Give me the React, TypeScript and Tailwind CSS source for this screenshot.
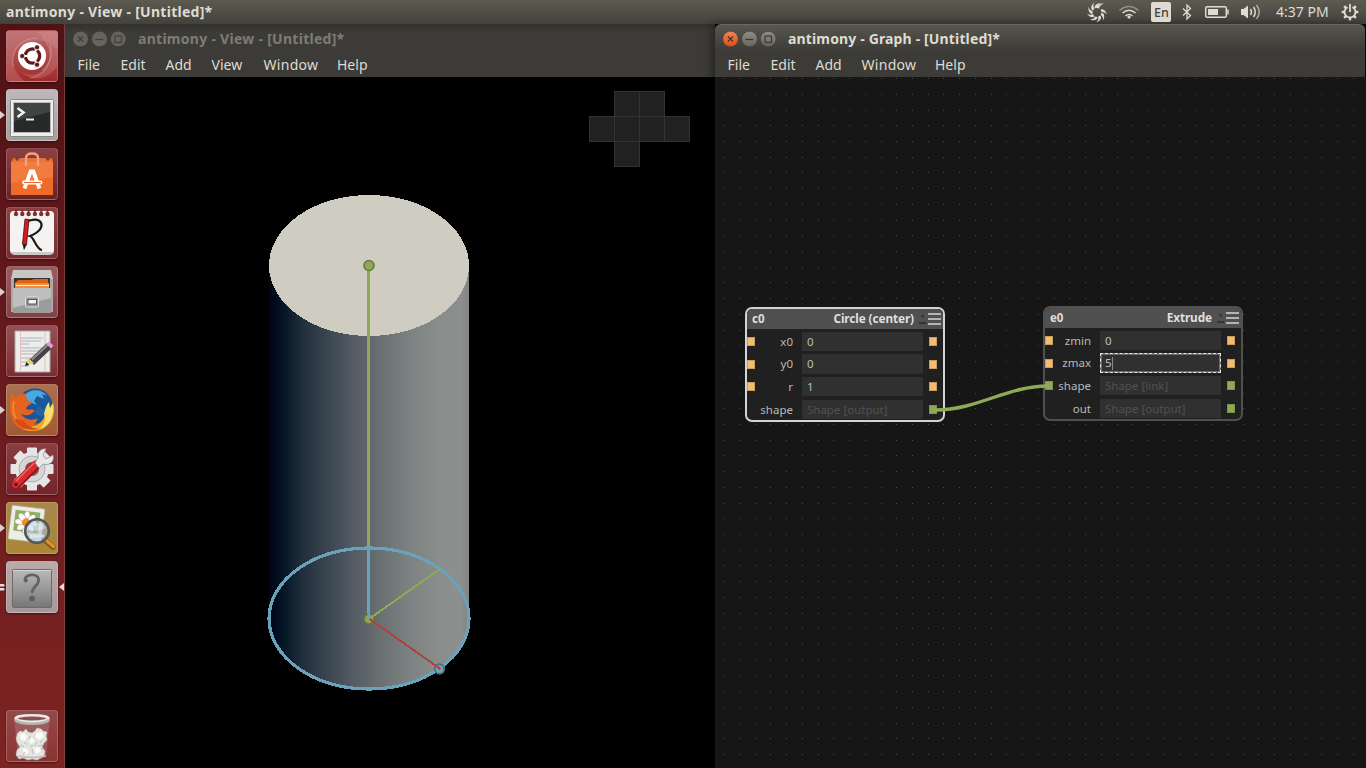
import type { ReactNode } from "react";

function WindowButtons({ active }: { active: boolean }) {
  const stroke = active ? "#3a3935" : "#3f3e3a";
  return (
    <svg className="block h-[18px] w-[54px] shrink-0" viewBox="0 0 54 18" fill="none">
      <defs>
        <linearGradient id="closeFill" x1="0" y1="0" x2="0" y2="1">
          <stop offset="0" stopColor="#f58256" />
          <stop offset="1" stopColor="#dd4c1c" />
        </linearGradient>
        <linearGradient id="grayFill" x1="0" y1="0" x2="0" y2="1">
          <stop offset="0" stopColor="#8f8d86" />
          <stop offset="1" stopColor="#66655f" />
        </linearGradient>
      </defs>
      <circle cx="8.500" cy="9" r="7.800" fill={active ? "url(#closeFill)" : "#64635d"} stroke="#37362f" strokeWidth=".5" />
      <circle cx="27.500" cy="9" r="7.800" fill={active ? "url(#grayFill)" : "#64635d"} stroke="#37362f" strokeWidth=".5" />
      <circle cx="46.200" cy="9" r="7.800" fill={active ? "url(#grayFill)" : "#64635d"} stroke="#37362f" strokeWidth=".5" />
      <path d="M6 6.500l5 5m0-5l-5 5" stroke={stroke} strokeWidth="1.3" />
      <path d="M23.500 9.500h8" stroke={stroke} strokeWidth="1.2" />
      <rect x="43" y="6" width="6.500" height="6.500" stroke={stroke} strokeWidth="1.2" />
    </svg>
  );
}

function MenuBar({ items }: { items: { label: string; box: string }[] }) {
  return (
    <div className="flex h-[26px] items-center bg-[#3c3b37] pt-[2px] pl-[12.500px] text-[14px] leading-none text-[#dfdbd2]">
      {items.map((m) => (
        <span key={m.label} className={m.box + " shrink-0 whitespace-nowrap"}>
          {m.label}
        </span>
      ))}
    </div>
  );
}

function Arrow({ side, count = 1 }: { side: "left" | "right"; count?: number }) {
  if (side === "right")
    return (
      <svg className="absolute top-5 left-[59px] h-3 w-[6px]" viewBox="0 0 6 12">
        <path d="M5 2v8L0 6z" fill="#e4dede" />
      </svg>
    );
  return (
    <svg className="absolute top-5 left-0 h-3 w-[6px]" viewBox="0 0 6 12">
      {count === 1 ? (
        <path d="M0 2v8l5-4z" fill="#d9cfd0" />
      ) : (
        <path d="M0 3h3.500l1.500 1.200-1.500 1.200H0zM0 7h3.500l1.500 1.200-1.500 1.200H0z" fill="#e4dede" />
      )}
    </svg>
  );
}

function Tile({ bg, arrow = 0, focused, last, children }: { bg: string; arrow?: number; focused?: boolean; last?: boolean; children: ReactNode }) {
  return (
    <div className={last ? "relative mt-auto pl-[6px]" : "relative pl-[6px]"}>
      {arrow > 0 && <Arrow side="left" count={arrow} />}
      {focused && <Arrow side="right" />}
      <div className={bg + " h-[52px] w-[52px] overflow-hidden rounded-[4px] border border-white/20 shadow-[0_1px_2px_rgba(0,0,0,0.45)]"}>
        <svg className="-mt-px -ml-px block h-[52px] w-[52px]" viewBox="0 0 52 52" fill="none">
          {children}
        </svg>
      </div>
    </div>
  );
}

function Launcher() {
  return (
    <aside className="flex h-full w-[65px] shrink-0 flex-col gap-[7px] border-r border-[#8a5a58]/60 bg-linear-to-b from-[#4f1215] via-[#681a1d] via-45% to-[#7d2422] pt-[6px] pb-[6px]">
      <Tile bg="bg-linear-to-b from-[#b5696b] to-[#a12a2a]">
        <path d="M0 0h52v20C42 8 20 6 9 22 4 32 9 45 20 52H0z" fill="#d58d8c" opacity=".35" />
        <path d="M31 2c16 9 18 29 5 39-7 5-17 4-22 0 12 12 29 9 38-6V0z" fill="#efb6b2" opacity=".2" />
        <path d="M7 36C5 20 14 8 32 8M44 14c4 16-4 32-20 34M36 6c12 15 10 26 0 35" stroke="#e7b4b2" strokeOpacity=".45" />
        <circle cx="26" cy="26" r="14" fill="#fff" />
        <circle cx="26.500" cy="26" r="7.200" stroke="#641a1b" strokeWidth="3.300" />
        <path d="M21 26h-5M29 21.500l3-5M29 30.500l3 5" stroke="#fff" strokeWidth="2" />
        <g fill="#641a1b" stroke="#fff" strokeWidth=".8">
          <circle cx="16.200" cy="26" r="2.600" /><circle cx="31" cy="17.300" r="2.600" /><circle cx="31" cy="34.700" r="2.600" />
        </g>
      </Tile>
      <Tile bg="bg-linear-to-b from-[#bdb8b9] to-[#a69fa0]" arrow={1}>
        <rect x="4.500" y="10.500" width="43" height="37" rx="1" fill="#eee" stroke="#888" />
        <rect x="7" y="13" width="38" height="31" fill="#b9b9b9" />
        <rect x="8" y="14" width="36" height="29" fill="#282a2a" />
        <path d="M8 14h36v9L8 32z" fill="#fff" opacity=".12" />
        <path d="M11.500 19l6 4.500-6 4.500" stroke="#eee" strokeWidth="2.700" />
        <path d="M20 30.500h8" stroke="#eee" strokeWidth="2" />
      </Tile>
      <Tile bg="bg-linear-to-b from-[#8a4043] to-[#6b2325]">
        <path d="M5 10l5 4v-4zM42 10h5v4z" fill="#b94e1a" />
        <path d="M5 14h42v33H5z" fill="#ee6b2a" />
        <path d="M5 14h42v15L5 35z" fill="#f79059" opacity=".45" />
        <path d="M5 14l3-4 3 3 3-3h25l3 3 3-3 2 4z" fill="#e5733d" />
        <path d="M20 18V10q0-4.500 6-4.500t6 4.500v8" stroke="#f3a27a" strokeWidth="2.400" />
        <path d="M18.500 40.500l6.100-17h2.800l6.100 17" stroke="#fff" strokeWidth="3.800" />
        <path d="M18 34.500h16.500" stroke="#fff" strokeWidth="4" strokeLinecap="round" />
        <path d="M18 34.500h17" stroke="#ee6b2a" strokeWidth="1.200" />
      </Tile>
      <Tile bg="bg-linear-to-b from-[#8e4144] to-[#7a2d31]">
        <rect x="4" y="4" width="44" height="43" rx="4" fill="#f4f3f1" />
        <path d="M5 45q0 3 4 3h34q4 0 5-3z" fill="#cbc8c5" />
        {[10, 16.3, 22.6, 28.900, 35.200, 41.500].map((x) => (
          <g key={x}>
            <path d={`M${x} 2v5`} stroke="#7c3034" strokeWidth="1.800" />
            <circle cx={x} cy="7" r="2.200" fill="#7c3034" />
          </g>
        ))}
        <path d="M20 15C35 7 44 21 24 29c4 1 6 13 12 14" stroke="#17191b" strokeWidth="2.200" />
        <path d="M19 12l4 .5-2.500 25.500-4-1z" fill="#d9191c" stroke="#3c1010" strokeWidth=".8" />
        <path d="M16.500 37l4 .8-2.500 5.500z" fill="#201a19" />
      </Tile>
      <Tile bg="bg-linear-to-b from-[#9d5c61] to-[#824047]" arrow={1}>
        <path d="M7 4h38l2 9H5z" fill="#c7c7c5" />
        <path d="M5 13h42v33H5z" fill="#a9a9a7" />
        <path d="M8 12h36v12H8z" fill="#3e322a" />
        <path d="M9 17l3-3h13l3-1h14v10H9z" fill="#d96319" />
        <path d="M9 17h34v7H9z" fill="#f08d3a" />
        <path d="M10 19.500h33" stroke="#fff1d9" strokeWidth="1.200" />
        <path d="M7 22h38v25H7z" fill="#9c9c9a" />
        <path d="M7 22h38v10L7 42z" fill="#bebebc" />
        <rect x="19.500" y="31" width="13" height="10" rx="1" fill="#999" stroke="#ddd" />
        <rect x="22" y="33.500" width="8.500" height="4.500" fill="#f4f4f4" stroke="#555" />
      </Tile>
      <Tile bg="bg-linear-to-b from-[#965055] to-[#7c2c30]">
        <path d="M9 6h35v41H9z" fill="#ececeb" stroke="#aaa" />
        <path d="M14.500 6v40M39 6v40" stroke="#e6a0a0" strokeWidth=".6" />
        <path d="M15 13h22M15 16h20M15 19h8M15 23h21M15 26h19M15 29h17M15 33h10M15 37h9M15 41h8" stroke="#a9adb3" strokeWidth=".9" />
        <path d="M41 18l5 5-18 17-5-5z" fill="#424344" />
        <path d="M25 34l16-15 1.500 1.500-16 15z" fill="#8a8a8a" />
        <path d="M40 19l3-2.500 4.500 4-2.500 3z" fill="#e29ad0" />
        <path d="M22 33l6 5-6 2-2-2z" fill="#e5d469" />
        <path d="M20.500 37l-1.500 4 4-1z" fill="#181818" />
      </Tile>
      <Tile bg="bg-linear-to-b from-[#aa7050] to-[#a15a32]" arrow={1}>
        <circle cx="29" cy="22" r="17.500" fill="#1b569a" />
        <path d="M18 12c5-7 17-8 23 0l-5-2 2 5-7-3-3 5 3 4-8-3z" fill="#49a8dc" />
        <path d="M32 22l8 4-3 7-8-3z" fill="#2464a6" />
        <path d="M47 19c4 15-5 28-21 28-9 0-14-4-17-9l14 4c10 1 16-6 17-16l4 3z" fill="#f0a527" />
        <path d="M38 30c1-4 2-9 5-12l1 6 3-5c2 12-3 22-13 26 5-6 6-10 4-15z" fill="#f9e06e" />
        <path d="M5 9l5 5c3-3 6-5 9-4l3 7h4l-1 3c-3 1-5 3-5 5 3 2 5-1 9 2-3 1-3 4-7 4-3 1-5-1-7-1 4 6 11 7 17 4-3 8-8 11-15 11C8 43 3 32 4 20c0-5 1-8 1-11z" fill="#e5631f" />
        <path d="M7 32c4 11 14 16 26 13-9-1-12-4-15-8-5-1-8-2-11-5z" fill="#d9491a" />
        <path d="M8 17c-2 7-1 12 2 18" stroke="#f38b32" strokeWidth="2" />
      </Tile>
      <Tile bg="bg-linear-to-b from-[#8b3d42] to-[#74252a]">
        <g fill="#e4e5e4">
          {[0, 45, 90, 135].map((a) => (
            <rect key={a} x="21" y="4.500" width="10" height="43" rx="1" transform={`rotate(${a} 26 26)`} />
          ))}
          <circle cx="26" cy="26" r="17" />
        </g>
        <circle cx="26" cy="26" r="13" fill="#d5d7d7" stroke="#adafaf" />
        <circle cx="26" cy="26" r="7" fill="#8c464a" />
        <path d="M10 42l20-20" stroke="#8c1418" strokeWidth="9" strokeLinecap="round" />
        <path d="M9.500 41.500l20-20" stroke="#d92c31" strokeWidth="7" strokeLinecap="round" />
        <path d="M10 38l18-18" stroke="#f36b69" strokeWidth="1.500" />
        <path d="M29 20l3-5c-1-6 3-10 8-9l-3 6 3 4 7-4c2 7-4 11-10 9l-4 4z" fill="#e8eae9" stroke="#8d8f90" strokeWidth=".8" />
        <circle cx="10" cy="41.500" r="1.800" fill="#651014" />
      </Tile>
      <Tile bg="bg-linear-to-b from-[#a8874e] to-[#aa8635]" arrow={1}>
        <g transform="rotate(7 20 22)">
          <rect x="4" y="5" width="33" height="34" rx="1" fill="#eeeee7" stroke="#b8b4a6" strokeWidth=".7" />
          <rect x="8" y="9" width="25" height="21" fill="#8fb060" />
          <g fill="#fdfcf6" stroke="#7c7c70" strokeWidth=".4">
            {[0, 45, 90, 135, 180, 225, 270, 315].map((a) => (
              <ellipse key={a} cx="20" cy="14" rx="3" ry="5" transform={`rotate(${a} 20 20.500)`} />
            ))}
          </g>
          <circle cx="20" cy="20.500" r="4.200" fill="#ee8e22" />
        </g>
        <path d="M39 38l8 7" stroke="#805010" strokeWidth="5.500" strokeLinecap="round" />
        <path d="M40.500 38.500l7 6" stroke="#db9229" strokeWidth="3.500" strokeLinecap="round" />
        <circle cx="31" cy="29" r="11.800" fill="#a9bfd9" fillOpacity=".55" stroke="#515855" strokeWidth="2.600" />
        <path d="M21 27c2-7 16-8 19-1l-8 3z" fill="#fff" opacity=".4" />
        <path d="M24 34h14" stroke="#e7edf5" strokeOpacity=".7" strokeWidth="3" />
      </Tile>
      <Tile bg="bg-linear-to-b from-[#b8abac] to-[#a79798]" arrow={2} focused>
        <defs>
          <linearGradient id="unknownFill" x1="0" y1="0" x2="0" y2="1">
            <stop stopColor="#bababa" /><stop offset="1" stopColor="#777" />
          </linearGradient>
        </defs>
        <rect x="6.500" y="8.500" width="39" height="38" rx="1" fill="url(#unknownFill)" stroke="#6f6969" />
        <path d="M7 9.500h38" stroke="#d4d4d4" />
        <path d="M19 19.500c-1-7 14.500-8 13.500 0 0 6-6.500 6-6.500 12.500" stroke="#636363" strokeWidth="2.700" />
        <path d="M31 15c4 5 0 9-3 11" stroke="#636363" strokeWidth="2" />
        <circle cx="26" cy="37.500" r="2.800" fill="#5c5c5c" />
        <circle cx="19.800" cy="19.500" r="2" fill="#636363" />
      </Tile>
      <Tile bg="bg-linear-to-b from-[#95494a] to-[#8a3332]" last>
        <path d="M9 10l3 36q14 4 28 0l3-36z" fill="#d7bbb9" opacity=".22" stroke="#e2caca" strokeOpacity=".7" />
        <g fill="#e3e5e1" stroke="#c3c6c0" strokeWidth=".5">
          <path d="M11 24l3-3 3 1 3-3 2 3 4 1 3-2 2-3 4 1 2 2 4 1-1 4 1 4-3 3-2 4 3 4-1 5-3 2-4 2-5-1-4 1-5-2-4 1-3-4 1-5 3-3-3-5-1-4 1-2z" />
        </g>
        <path d="M14 25l4-2 3 3-2 5-4-1zM30 23l5-1 3 4-4 4-4-2zM22 29l4-1 3 3-4 3zM16 39l4-1 3 4-4 3zM28 38l5-1 2 4-5 3z" fill="#fbfcfa" />
        <path d="M18 32l3 3m3-9l-1 4m8 2l-2 4m7-6l-2 3M17 45l2-3m7-3l1 5m8-6l2 3M14 35l4 2m6 0l3-2m5 1l4-1" stroke="#b4b7b0" strokeWidth=".9" />
        <path d="M12 46q14 3 28 0" stroke="#bcbcb8" strokeWidth="1.500" />
        <ellipse cx="26" cy="8.500" rx="16.500" ry="3.200" fill="#8d4e4d" stroke="#e8e8e4" strokeWidth="2.500" />
        <path d="M9 10c5 5 29 5 34 0" stroke="#b4b5af" strokeWidth="2.500" />
      </Tile>
    </aside>
  );
}

function StatusIcons() {
  return (
    <svg className="block h-6 w-[182px] shrink-0" viewBox="1084 0 182 24" fill="none" stroke="#dfdbd2">
      <g fill="#dfdbd2" stroke="none">
        {[0, 40, 80, 120, 160, 200, 240, 280].map((a) => (
          <path key={a} d="M1094.800 8.200c-.6-3 2-5 6.200-5.200-2.500 1.300-3.500 2.600-3.400 4.700z" transform={`rotate(${-a} 1097 12.300)`} />
        ))}
        <path d="M1096.500 8c.5-3.500 4-5 8-4.500-3.500 1-5 2.500-5.500 5z" />
      </g>
      <g strokeWidth="1.600">
        <path d="M1119.500 10.500q9.500-8 19 0" opacity=".45" />
        <path d="M1122.500 13q6.500-5.500 13 0" />
        <path d="M1125.500 16q3.500-3 7 0" />
      </g>
      <path d="M1127 17l2-1.500 2 1.500-2 2z" fill="#dfdbd2" stroke="none" />
      <rect x="1151" y="2" width="20" height="20" rx="2" fill="#dfdbd2" stroke="none" />
      <path d="M1183 8.500l7.500 7-3.500 3.500V5l3.500 3.500-7.500 7" strokeWidth="1.300" />
      <rect x="1205.700" y="6.700" width="20.600" height="10.600" rx="1.500" strokeWidth="1.500" />
      <path d="M1228 9.500v5" strokeWidth="1.500" />
      <path d="M1208 9h10v6h-10z" fill="#dfdbd2" stroke="none" />
      <path d="M1241 9h2.500l4.500-3.500v13l-4.500-3.500h-2.500z" fill="#dfdbd2" stroke="none" />
      <path d="M1250.500 9q2 3 0 6M1253.500 7q3.500 5 0 10" strokeWidth="1.500" />
      <path d="M1256.500 5q5.500 7 0 14" strokeWidth="1.500" opacity=".65" />
    </svg>
  );
}

function CogIcon() {
  return (
    <svg className="block h-6 w-[18px] shrink-0" viewBox="0 0 18 24" fill="none" stroke="#dfdbd2">
      {[45, 90, 135, 180, 225, 270, 315].map((a) => (
        <path key={a} d="M9 7V3.700" strokeWidth="2.400" transform={`rotate(${a} 9 12)`} />
      ))}
      <path d="M6.500 7.100a5.500 5.500 0 1 0 5 0" strokeWidth="1.800" />
      <path d="M9 4v8" strokeWidth="1.800" />
    </svg>
  );
}

function TopPanel() {
  return (
    <header className="flex h-6 shrink-0 items-center bg-linear-to-b from-[#5d5b50] to-[#42413c] pl-[6px] text-[#dfdbd2]">
      <span className="text-[14px] leading-none font-bold tracking-[0.28px] whitespace-nowrap">antimony - View - [Untitled]*</span>
      <div className="relative ml-auto flex h-6 items-center">
        <StatusIcons />
        <span className="absolute top-[5px] left-[70px] text-[12.5px] leading-[15px] font-medium text-[#45443f]">En</span>
        <span className="ml-[10px] w-[54px] text-[14px] leading-none whitespace-nowrap">4:37 PM</span>
        <div className="ml-[11px] mr-[7px]"><CogIcon /></div>
      </div>
    </header>
  );
}

function OrientationCells() {
  const cells = [[25, 0], [50, 0], [0, 25], [25, 25], [50, 25], [75, 25], [25, 50]];
  return (
    <g fill="#212121" stroke="#333" shapeRendering="crispEdges">
      {cells.map(([x, y]) => (
        <rect key={`${x}-${y}`} x={524.5 + x} y={14.5 + y} width="25" height="25" />
      ))}
    </g>
  );
}

function ViewWindow() {
  return (
    <section className="flex w-[650px] shrink-0 flex-col">
      <div className="flex h-[27px] items-center bg-linear-to-b from-[#32312e] to-[#3c3b37] to-30% pl-[7px] text-[#7f7c74]">
        <div className="mt-[2px] flex items-center">
          <WindowButtons active={false} />
          <span className="ml-3 text-[14px] leading-none font-bold tracking-[0.28px] whitespace-nowrap">antimony - View - [Untitled]*</span>
        </div>
      </div>
      <MenuBar
        items={[
          { label: "File", box: "w-[43px]" },
          { label: "Edit", box: "w-[45px]" },
          { label: "Add", box: "w-[46px]" },
          { label: "View", box: "w-[52px]" },
          { label: "Window", box: "w-[73.500px] tracking-[0.3px]" },
          { label: "Help", box: "w-[40px]" },
        ]}
      />
      <svg className="block h-[691px] w-[650px] bg-black" viewBox="0 0 650 691" fill="none">
        <defs>
          <linearGradient id="cylinder" gradientUnits="userSpaceOnUse" x1="204" y1="0" x2="404" y2="0">
            <stop offset="0" stopColor="#000512" />
            <stop offset=".03" stopColor="#000a1c" />
            <stop offset=".08" stopColor="#061827" />
            <stop offset=".16" stopColor="#202d3a" />
            <stop offset=".28" stopColor="#38434f" />
            <stop offset=".42" stopColor="#535b63" />
            <stop offset=".55" stopColor="#696f71" />
            <stop offset=".7" stopColor="#7c8281" />
            <stop offset=".85" stopColor="#898e8c" />
            <stop offset=".96" stopColor="#8c8f8d" />
            <stop offset="1" stopColor="#818483" />
          </linearGradient>
        </defs>
        <path d="M204 188.500v353a100 70.500 0 0 0 200 0v-353z" fill="url(#cylinder)" shapeRendering="crispEdges" />
        <ellipse cx="304" cy="188.500" rx="100" ry="70.500" fill="#cfccc1" shapeRendering="crispEdges" />
        <path d="M303.500 191v350" stroke="#8faa56" strokeWidth="3" shapeRendering="crispEdges" />
        <circle cx="304" cy="542" r="4.800" fill="#8ea755" stroke="#66793d" strokeWidth="1.600" />
        <circle cx="304" cy="188.500" r="5" fill="#8faa56" stroke="#66793d" strokeWidth="1.600" />
        <ellipse cx="304" cy="541.500" rx="100" ry="70.500" stroke="#6ba2ba" strokeWidth="3.200" shapeRendering="crispEdges" />
        <path d="M304 471v71" stroke="#6ba2ba" strokeWidth="2" shapeRendering="crispEdges" />
        <circle cx="374.500" cy="592" r="4.800" fill="#6ba2ba" stroke="#456f82" strokeWidth="1.800" />
        <path d="M304 542l71-50" stroke="#8faa56" strokeWidth="2" shapeRendering="crispEdges" />
        <path d="M304.500 542l71 50" stroke="#ad423f" strokeWidth="2" shapeRendering="crispEdges" />
        <OrientationCells />
      </svg>
    </section>
  );
}

type Row = { label: string; value: string; left?: string; right: string; ghost?: boolean; focused?: boolean };

const AMBER = "bg-[#f5bc70] outline-[#c79c61]";
const GREEN = "bg-[#8faa56] outline-[#7c9449]";

function GraphNode({ place, frame, name, title, rows }: { place: string; frame: string; name: string; title: string; rows: Row[] }) {
  return (
    <div className={`absolute flex h-[115px] w-[200px] flex-col overflow-hidden rounded-[7px] border-2 bg-[#202020] ${place} ${frame}`}>
      <div className="flex h-5 shrink-0 items-center bg-[#505050] pl-[5px] pr-[2px] text-[12px] font-bold text-[#dfdfdf]">
        <span className="text-[11.500px]">{name}</span>
        <span className="ml-auto text-[11.800px] tracking-[-0.1px]">{title}</span>
        <svg className="ml-[3px] block h-4 w-6" viewBox="0 0 24 16">
          <path d="M4.500 4h2.500v2.500h-2.500zM2 11h7v2H2z" fill="#333" />
          <path d="M11 2h13v2H11zM11 7h13v2H11zM11 12h13v2H11z" fill="#b4b4b4" />
        </svg>
      </div>
      <div className="flex flex-col gap-[3.200px] pt-[2.600px]">
        {rows.map((r) => (
          <div key={r.label} className="flex h-[19.500px] shrink-0 items-center text-[11.500px] text-[#b9b9b9]">
            <div className={`h-[9px] w-2 shrink-0 ${r.left ? r.left + " outline-1 -outline-offset-1" : ""}`} />
            <span className="w-[38px] shrink-0 text-right">{r.label}</span>
            <div
              className={`ml-[9px] flex h-full w-[121px] shrink-0 items-center rounded-[1px] bg-[#303030] ${r.focused ? "border-2 border-[#6c6c6c] pl-[3px] outline-1 -outline-offset-1 outline-dashed outline-[#e8e8e8]" : "pl-[5px]"} ${r.ghost ? "text-[#515151]" : "text-[#bcbcbc]"}`}
            >
              {r.value}
              {r.focused && <span className="h-[13px] w-[1.500px] bg-[#888]" />}
            </div>
            <div className={`ml-[6px] h-[9px] w-2 shrink-0 outline-1 -outline-offset-1 ${r.right}`} />
          </div>
        ))}
      </div>
    </div>
  );
}

function DotGrid() {
  const dots: ReactNode[] = [];
  for (let j = 0; j < 44; j++)
    for (let i = 0; i < 41; i++)
      dots.push(<rect key={`${i}-${j}`} x={Math.floor(8.6 + i * 15.74)} y={Math.floor(1.6 + j * 15.72)} width="1" height="1" />);
  return <g fill="#4d4d4d">{dots}</g>;
}

function GraphWindow() {
  return (
    <section className="flex w-[651px] shrink-0 flex-col bg-black shadow-[-3px_0_8px_rgba(0,0,0,0.4)]">
      <div className="mr-px flex h-[27px] items-center rounded-t-[6px] border-t border-[#6a6860] bg-linear-to-b from-[#58564e] to-[#3c3b37] pl-[7px] text-[#dfdbd2]">
        <div className="mt-px flex items-center">
          <WindowButtons active />
          <span className="ml-3 text-[14px] leading-none font-bold tracking-[0.15px] whitespace-nowrap">antimony - Graph - [Untitled]*</span>
        </div>
      </div>
      <div className="mr-px">
        <MenuBar
          items={[
            { label: "File", box: "w-[43px]" },
            { label: "Edit", box: "w-[45px]" },
            { label: "Add", box: "w-[46px]" },
            { label: "Window", box: "w-[73.500px] tracking-[0.3px]" },
            { label: "Help", box: "w-[40px]" },
          ]}
        />
      </div>
      <div className="relative h-[691px] bg-[#161616]">
        <svg className="block h-[691px] w-[651px]" viewBox="0 0 651 691">
          <DotGrid />
        </svg>
        <GraphNode
          place="left-[30px] top-[230px]"
          frame="border-[#d4d4d4]"
          name="c0"
          title="Circle (center)"
          rows={[
            { label: "x0", value: "0", left: AMBER, right: AMBER },
            { label: "y0", value: "0", left: AMBER, right: AMBER },
            { label: "r", value: "1", left: AMBER, right: AMBER },
            { label: "shape", value: "Shape [output]", right: GREEN, ghost: true },
          ]}
        />
        <GraphNode
          place="left-[328px] top-[229px]"
          frame="border-[#505050]"
          name="e0"
          title="Extrude"
          rows={[
            { label: "zmin", value: "0", left: AMBER, right: AMBER },
            { label: "zmax", value: "5", left: AMBER, right: AMBER, focused: true },
            { label: "shape", value: "Shape [link]", left: GREEN, right: GREEN, ghost: true },
            { label: "out", value: "Shape [output]", right: GREEN, ghost: true },
          ]}
        />
        <svg className="absolute top-[300px] left-[218px] block h-10 w-[120px]" viewBox="218 300 120 40" fill="none">
          <path d="M221 333C262 333 292 309 333 309" stroke="#8faa56" strokeWidth="3.400" />
        </svg>
      </div>
    </section>
  );
}

export default function App() {
  return (
    <div className="flex h-[768px] w-[1366px] flex-col overflow-hidden bg-black font-['Noto_Sans','Open_Sans',sans-serif]">
      <TopPanel />
      <main className="flex h-[744px]">
        <Launcher />
        <ViewWindow />
        <GraphWindow />
      </main>
    </div>
  );
}
